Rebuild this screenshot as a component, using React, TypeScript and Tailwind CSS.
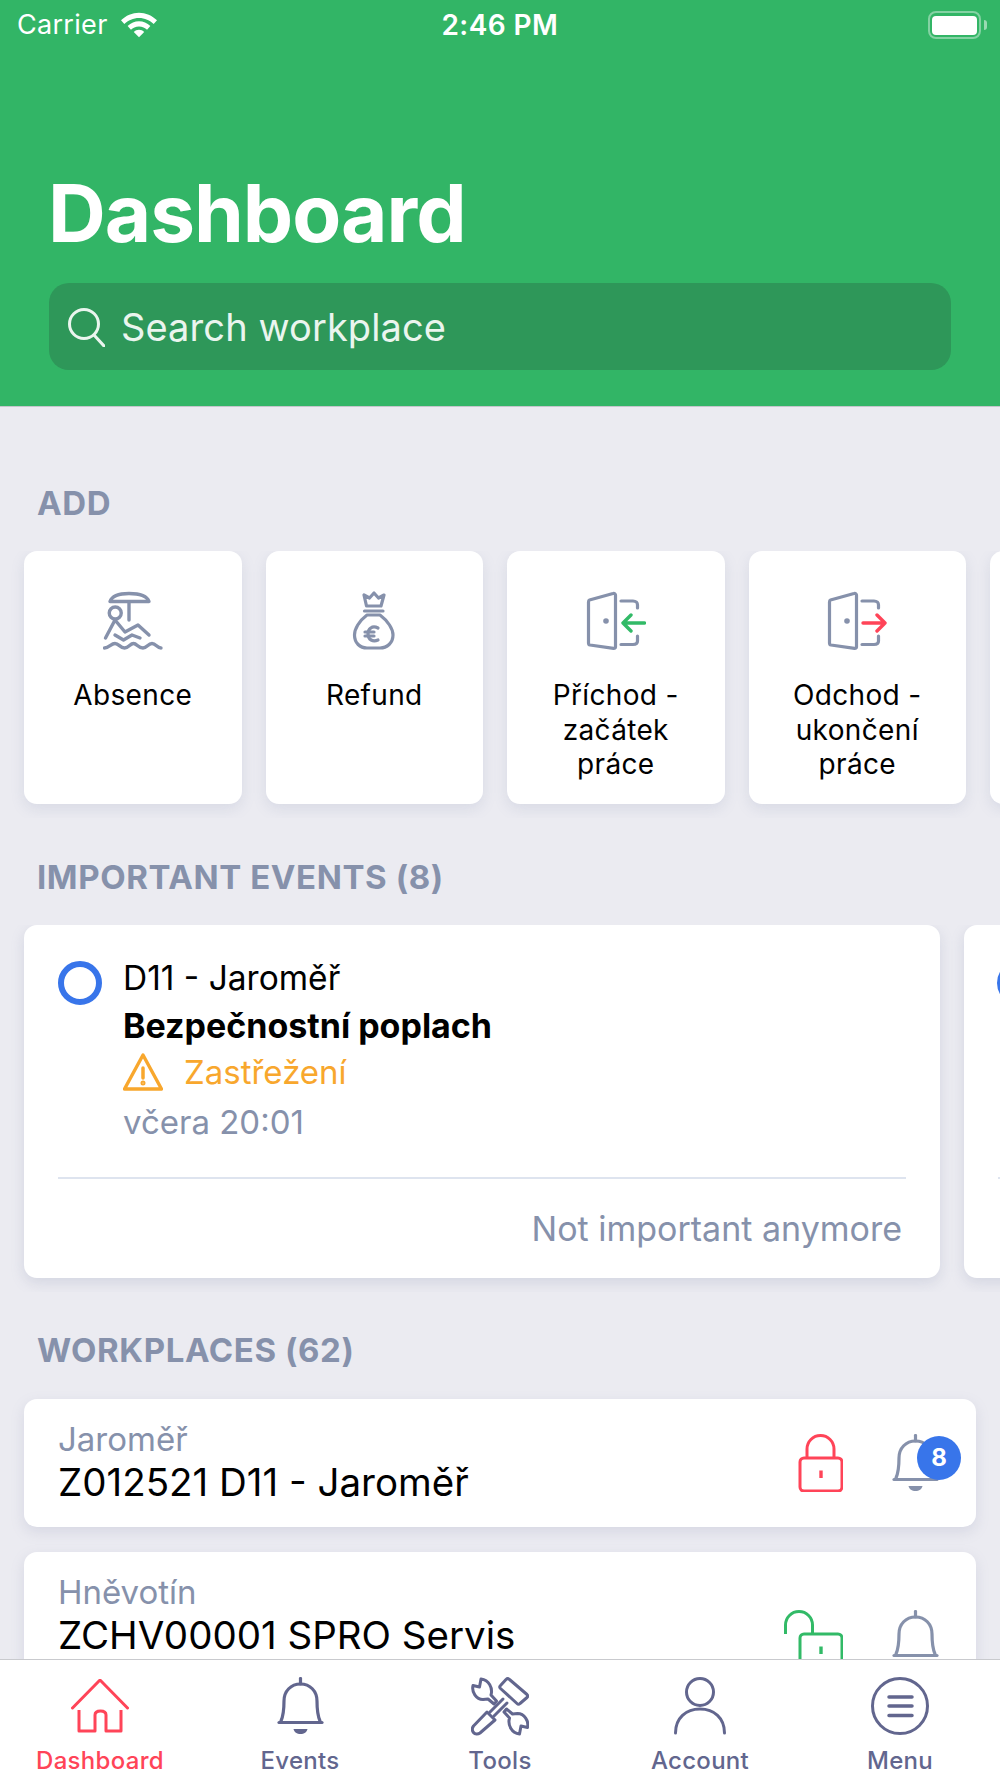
import React from "react";

const font = { fontFamily: "Inter, 'Noto Sans', sans-serif" };

function Bell({ color, className }: { color: string; className?: string }) {
  return (
    <svg viewBox="0 0 47 58" className={className} fill="none" stroke={color} strokeWidth="3.2" strokeLinecap="round" strokeLinejoin="round">
      <path d="M23.5 1.5V7" />
      <path d="M2 45.5H45" />
      <path d="M4 44C7 37 7 31 7 24C7 14 14 7 23.5 7C33 7 40 14 40 24C40 31 40 37 43 44" />
      <path d="M16.5 52H30.5C30 55 27 57 23.5 57C20 57 17 55 16.5 52Z" fill={color} stroke="none" />
    </svg>
  );
}

function Door({ arrow, dir }: { arrow: string; dir: "in" | "out" }) {
  return (
    <svg viewBox="0 0 60 60" className="h-[60px] w-[60px]" fill="none" strokeLinecap="round" strokeLinejoin="round">
      <path d="M3.5 9L27 2.5C28.5 2 29.5 3 29.5 4V56C29.5 57 28.5 57.5 27.5 57.3L4 54C3 53.8 2.5 53 2.5 52V11C2.5 10 2.7 9.3 3.5 9Z" stroke="#8691AB" strokeWidth="3.2" />
      <circle cx="20" cy="30" r="2.8" fill="#8691AB" />
      <path d="M35 10H47C50 10 51.5 12 51.5 14V17" stroke="#8691AB" strokeWidth="3.2" />
      <path d="M35 53.5H47C50 53.5 51.5 52 51.5 50V45" stroke="#8691AB" strokeWidth="3.2" />
      {dir === "in" ? (
        <path d="M58.5 32H37M45 24L37 32L45 40" stroke={arrow} strokeWidth="3.4" />
      ) : (
        <path d="M36 32H58M50 24L58 32L50 40" stroke={arrow} strokeWidth="3.4" />
      )}
    </svg>
  );
}

function AbsenceIcon() {
  return (
    <svg viewBox="0 0 60 60" className="h-[60px] w-[60px]" fill="none" stroke="#8691AB" strokeWidth="3.4" strokeLinecap="round" strokeLinejoin="round">
      <path d="M7 10.5C9 5 15 2.5 26 2.5C37 2.5 44 5 46 10.5Z" />
      <path d="M26 11V29" />
      <circle cx="12.25" cy="22" r="6" />
      <path d="M12 29L2.5 47M12 29L22 41L35 34L46 44" />
      <path d="M12 44L20.5 49L29 44L37 47" />
      <path d="M1.5 57C6 57 8 52.5 12 52.5C16 52.5 17 57 21.5 57C26 57 27 52.5 30.5 52.5C34 52.5 35 57 40 57C44 57 45 52.5 49 52.5C53 52.5 54 57 58 57" />
    </svg>
  );
}

function RefundIcon() {
  return (
    <svg viewBox="0 0 60 60" className="h-[60px] w-[60px]" fill="none" stroke="#8691AB" strokeWidth="3.2" strokeLinecap="round" strokeLinejoin="round">
      <path d="M20 4L22.5 15H37L40 4L34.5 7L30 2L25.5 7Z" />
      <path d="M20.5 20H39" />
      <path d="M23 24H36C44 30 49 38 49 44C49 52 43 57 36 57H23C16 57 10.5 52 10.5 44C10.5 38 15 30 23 24Z" />
      <path d="M34 37C28 34 24 38 24 43C24 49 29 51 34 49" />
      <path d="M21 41H30M21 45H30" />
    </svg>
  );
}

function Lock({ open }: { open?: boolean }) {
  const c = open ? "#32BA67" : "#FF4458";
  return (
    <svg viewBox="0 0 59 58" className="h-[58px] w-[59px]" fill="none" stroke={c} strokeWidth="3" strokeLinejoin="round">
      {open ? <path d="M1.5 24V15C1.5 7.5 7.5 1.5 15 1.5C22.5 1.5 28.5 7.5 28.5 15V24" /> : <path d="M23 24V15C23 7.5 29 1.5 36.5 1.5C44 1.5 50 7.5 50 15V24" />}
      <rect x="16" y="24" width="42" height="33" rx="4" />
      <path d="M37 36.5V44" strokeWidth="3.4" />
    </svg>
  );
}

function ToolsIcon() {
  const wrench = "M10 3L8.5 11L2 9.5C0.5 16 5 23.5 12 23.5L17 23L23 28L25.5 25L20 19C22 12 18 4 10 3Z";
  return (
    <svg viewBox="0 0 58 61" className="h-[61px] w-[58px]" fill="none" stroke="#62668E" strokeWidth="3" strokeLinecap="round" strokeLinejoin="round">
      <path d="M35 3.5C36 2.5 37.5 2.5 38.5 3.5L56 18.5C57 19.5 57 20.5 56 21.5L49 27.5C48 28.5 47 28.5 46 27.5L29.5 12.5C28.5 11.5 28.5 10.5 29.5 9.5Z" />
      <path d="M32 23L19 36M36 27L23 40" />
      <path d="M16 36L24 44L9 57C7 58.5 4 58.5 2.5 56.5C1 54.5 1 52 2.5 50Z" />
      <path d={wrench} />
      <path d={wrench} transform="rotate(180 29.25 30.5)" />
    </svg>
  );
}

function Tab({ label, active, children }: { label: string; active?: boolean; children: React.ReactNode }) {
  return (
    <div className="flex w-[200px] flex-col items-center pt-[17px]">
      <div className="flex h-[58px] items-center justify-center">{children}</div>
      <div className={`mt-[11px] text-[24px] leading-[29px] font-medium tracking-[0.3px] ${active ? "text-[#FF4458]" : "text-[#62668E]"}`}>{label}</div>
    </div>
  );
}

function ActionCard({ icon, lines }: { icon: React.ReactNode; lines: string[] }) {
  return (
    <div className="flex h-[253px] w-[217.5px] shrink-0 flex-col items-center rounded-[13px] bg-white pt-[40px] shadow-[0_5px_14px_rgba(120,130,165,0.16)]">
      <div className="h-[60px] w-[60px]">{icon}</div>
      <div className="mt-[27px] text-center text-[28px] leading-[34.7px] tracking-[0.35px] text-black">
        {lines.map((l) => (
          <div key={l}>{l}</div>
        ))}
      </div>
    </div>
  );
}

function SectionLabel({ children, className }: { children: React.ReactNode; className?: string }) {
  return <div className={`pl-[37px] text-[33px] leading-[38px] font-bold tracking-[0.6px] text-[#8691AB] ${className}`}>{children}</div>;
}

function Workplace({ place, name, icons, iconsClass }: { place: string; name: string; icons: React.ReactNode; iconsClass: string }) {
  return (
    <div className="flex h-[128px] shrink-0 items-start justify-between rounded-[13px] bg-white pt-[17px] pr-[37px] pl-[34px] shadow-[0_5px_14px_rgba(120,130,165,0.18)]">
      <div>
        <div className="text-[33px] leading-[46px] text-[#8691AB]">{place}</div>
        <div className="mt-[-3px] text-[38.5px] leading-[46px] text-black">{name}</div>
      </div>
      <div className={`flex items-start gap-[49px] ${iconsClass}`}>{icons}</div>
    </div>
  );
}

export default function App() {
  return (
    <div className="flex h-[1778px] w-[1000px] flex-col overflow-hidden bg-[#EBEBF1]" style={font}>
      <header className="h-[407px] shrink-0 border-b border-[#C4C6CC] bg-[#32B566]">
        <div className="flex h-[50px] items-center justify-between text-white">
          <div className="flex items-center gap-[13px] pl-[17px]">
            <span className="text-[27px] leading-[32px] tracking-[0.3px]">Carrier</span>
            <svg viewBox="0 0 38 26" className="h-[26px] w-[36px]" fill="white">
              <path d="M19 0C26 0 33 3 38 8L34.5 12C30.5 8 25 5.5 19 5.5C13 5.5 7.5 8 3.5 12L0 8C5 3 12 0 19 0Z" />
              <path d="M19 9C23.5 9 27.5 11 31 14L27.5 18C25.5 15.8 22.5 14.5 19 14.5C15.5 14.5 12.5 15.8 10.5 18L7 14C10.5 11 14.5 9 19 9Z" />
              <path d="M19 18C21 18 23 18.8 24.5 20.5L19 26L13.5 20.5C15 18.8 17 18 19 18Z" />
            </svg>
          </div>
          <span className="ml-[-85px] text-[28px] leading-[32px] font-semibold tracking-[0.4px]">2:46 PM</span>
          <div className="flex items-center gap-[3px] pr-[13px]">
            <div className="flex h-[28px] w-[53px] items-center justify-center rounded-[8px] border-2 border-white/40">
              <div className="h-[19px] w-[45px] rounded-[4px] bg-white" />
            </div>
            <div className="h-[10px] w-[3px] rounded-r-[3px] bg-white/50" />
          </div>
        </div>
        <h1 className="mt-[114px] pl-[48px] text-[80px] leading-[97px] font-bold tracking-[-1px] text-white">Dashboard</h1>
        <div className="mx-[49px] mt-[22px] flex h-[87px] items-center rounded-[20px] bg-[#2E9759] pl-[18px]">
          <svg viewBox="0 0 38 40" className="h-[40px] w-[38px]" fill="none" stroke="#EAF5EE" strokeWidth="3" strokeLinecap="round">
            <circle cx="17" cy="17" r="14.5" />
            <path d="M27 28L37 39" />
          </svg>
          <span className="ml-[16px] text-[38px] leading-[46px] tracking-[0.1px] text-[#EAF5EE]">Search workplace</span>
        </div>
      </header>

      <main className="min-h-0 flex-1 overflow-hidden">
        <SectionLabel className="mt-[77px]">ADD</SectionLabel>
        <div className="mt-[29px] flex gap-[24px] overflow-hidden pb-[14px] pl-[24px]">
          <ActionCard icon={<AbsenceIcon />} lines={["Absence"]} />
          <ActionCard icon={<RefundIcon />} lines={["Refund"]} />
          <ActionCard icon={<Door arrow="#32BA67" dir="in" />} lines={["Příchod -", "začátek", "práce"]} />
          <ActionCard icon={<Door arrow="#FF4458" dir="out" />} lines={["Odchod -", "ukončení", "práce"]} />
          <div className="h-[253px] w-[217.5px] shrink-0 rounded-[13px] bg-white shadow-[0_5px_14px_rgba(120,130,165,0.16)]" />
        </div>

        <SectionLabel className="mt-[40px]">IMPORTANT EVENTS (8)</SectionLabel>
        <div className="mt-[29px] flex gap-[24px] overflow-hidden pb-[14px] pl-[24px]">
          <div className="h-[353px] w-[916px] shrink-0 rounded-[13px] bg-white px-[34px] pt-[30px] shadow-[0_5px_14px_rgba(120,130,165,0.2)]">
            <div className="flex">
              <div className="mt-[6px] h-[44px] w-[44px] shrink-0 rounded-full border-[6px] border-[#3875EA]" />
              <div className="ml-[21px]">
                <div className="text-[33.5px] leading-[47px] text-black">D11 - Jaroměř</div>
                <div className="text-[34px] leading-[47px] font-bold text-black">Bezpečnostní poplach</div>
                <div className="flex h-[47px] items-center text-[33px] text-[#F8A72D]">
                  <svg viewBox="0 0 40 38" className="mt-[-2px] mr-[21px] h-[38px] w-[40px]" fill="none" stroke="#F8A72D" strokeWidth="3.4" strokeLinejoin="round" strokeLinecap="round">
                    <path d="M20 2L38.5 36H1.5Z" />
                    <path d="M20 15V25" strokeWidth="3.5" />
                    <circle cx="20" cy="30" r="1.5" strokeWidth="2" />
                  </svg>
                  Zastřežení
                </div>
                <div className="mt-[2px] text-[33px] leading-[48px] text-[#8691AB]">včera 20:01</div>
              </div>
            </div>
            <div className="mt-[31px] h-[2px] bg-[#DEE4EF]" />
            <div className="mt-[26px] pr-[4px] text-right text-[34px] leading-[48px] text-[#8691AB]">Not important anymore</div>
          </div>
          <div className="h-[353px] w-[916px] shrink-0 rounded-[13px] bg-white px-[34px] pt-[36px] shadow-[0_5px_14px_rgba(120,130,165,0.2)]">
            <div className="ml-[-1px] h-[44px] w-[44px] rounded-full border-[6px] border-[#3875EA]" />
            <div className="mt-[172px] h-[2px] bg-[#DEE4EF]" />
          </div>
        </div>

        <SectionLabel className="mt-[39px]">WORKPLACES (62)</SectionLabel>
        <div className="mt-[30px] flex flex-col gap-[25px] pr-[24px] pl-[24px]">
          <Workplace
            place="Jaroměř"
            name="Z012521 D11 - Jaroměř"
            iconsClass="pt-[18px]"
            icons={
              <>
                <Lock />
                <div className="relative h-[58px] w-[47px]">
                  <Bell color="#8691AB" className="h-[58px] w-[47px]" />
                  <div className="absolute top-[2px] left-[25px] flex h-[44px] w-[44px] items-center justify-center rounded-full bg-[#3875EA] text-[24px] font-bold text-white">8</div>
                </div>
              </>
            }
          />
          <Workplace
            place="Hněvotín"
            name="ZCHV00001 SPRO Servis"
            iconsClass="pt-[41px]"
            icons={
              <>
                <Lock open />
                <Bell color="#8691AB" className="h-[58px] w-[47px]" />
              </>
            }
          />
        </div>
      </main>

      <nav className="flex h-[119px] shrink-0 border-t border-[#C9CACE] bg-white">
        <Tab label="Dashboard" active>
          <svg viewBox="0 0 58 54" className="h-[54px] w-[58px]" fill="none" stroke="#FF4458" strokeWidth="3" strokeLinecap="round" strokeLinejoin="round">
            <path d="M1.5 29L28 2C28.5 1.5 29.5 1.5 30 2L56.5 29" />
            <path d="M8 31V52H24V36C24 33 26 32 29.5 32C33 32 35 33 35 36V52H50V31" strokeLinecap="butt" />
          </svg>
        </Tab>
        <Tab label="Events">
          <Bell color="#62668E" className="h-[58px] w-[47px]" />
        </Tab>
        <Tab label="Tools">
          <ToolsIcon />
        </Tab>
        <Tab label="Account">
          <svg viewBox="0 0 52 58" className="h-[58px] w-[52px]" fill="none" stroke="#62668E" strokeWidth="3" strokeLinecap="round">
            <circle cx="26" cy="15" r="13.5" />
            <path d="M1.5 56C1.5 41 12 32 26 32C40 32 50.5 41 50.5 56" />
          </svg>
        </Tab>
        <Tab label="Menu">
          <svg viewBox="0 0 58 58" className="h-[58px] w-[58px]" fill="none" stroke="#62668E" strokeLinecap="round">
            <circle cx="29" cy="29" r="27.5" strokeWidth="3" />
            <path d="M18 20H41M18 29H41M18 38.5H41" strokeWidth="3.5" />
          </svg>
        </Tab>
      </nav>
    </div>
  );
}
